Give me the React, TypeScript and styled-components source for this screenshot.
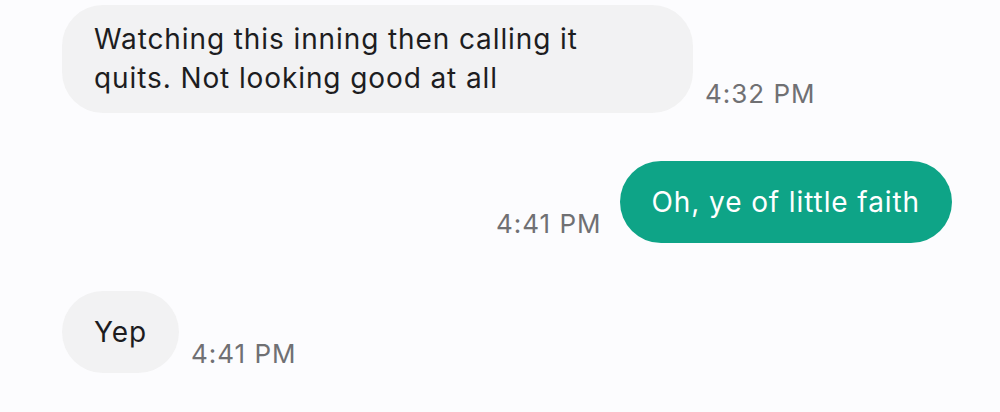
import styled, { createGlobalStyle } from 'styled-components'

const GlobalStyle = createGlobalStyle`
  html, body {
    margin: 0;
    padding: 0;
    background: #fcfcfe;
  }
  body {
    font-family: Inter, Roboto, 'Liberation Sans', sans-serif;
    -webkit-font-smoothing: antialiased;
  }
`

const Thread = styled.div`
  display: flex;
  flex-direction: column;
  gap: 48px;
  padding: 5px 48px 0 62px;
  width: 1000px;
  height: 412px;
  box-sizing: border-box;
  background: #fcfcfe;
  overflow: hidden;
`

const Row = styled.div<{ outgoing?: boolean }>`
  display: flex;
  align-items: flex-end;
  flex-direction: ${({ outgoing }) => (outgoing ? 'row-reverse' : 'row')};
  gap: ${({ outgoing }) => (outgoing ? '18px' : '12px')};
`

const Bubble = styled.div<{ outgoing?: boolean }>`
  display: flex;
  align-items: center;
  box-sizing: border-box;
  min-height: 82px;
  max-width: 631px;
  padding: 15px 32px 15px 32px;
  border-radius: 41px;
  font-size: 28px;
  line-height: 39px;
  letter-spacing: 0.9px;
  background: ${({ outgoing }) => (outgoing ? '#0ea487' : '#f2f2f3')};
  color: ${({ outgoing }) => (outgoing ? '#ffffff' : '#1d1d1f')};
`

const Time = styled.span`
  font-size: 26px;
  line-height: 26px;
  letter-spacing: 1px;
  color: #707073;
  margin-bottom: 6px;
  white-space: nowrap;
`

type Message = { text: string; time: string; outgoing?: boolean }

const messages: Message[] = [
  { text: 'Watching this inning then calling it quits. Not looking good at all', time: '4:32 PM' },
  { text: 'Oh, ye of little faith', time: '4:41 PM', outgoing: true },
  { text: 'Yep', time: '4:41 PM' },
]

export default function App() {
  return (
    <>
      <GlobalStyle />
      <Thread>
        {messages.map((m, i) => (
          <Row key={i} outgoing={m.outgoing}>
            <Bubble outgoing={m.outgoing}>{m.text}</Bubble>
            <Time>{m.time}</Time>
          </Row>
        ))}
      </Thread>
    </>
  )
}
